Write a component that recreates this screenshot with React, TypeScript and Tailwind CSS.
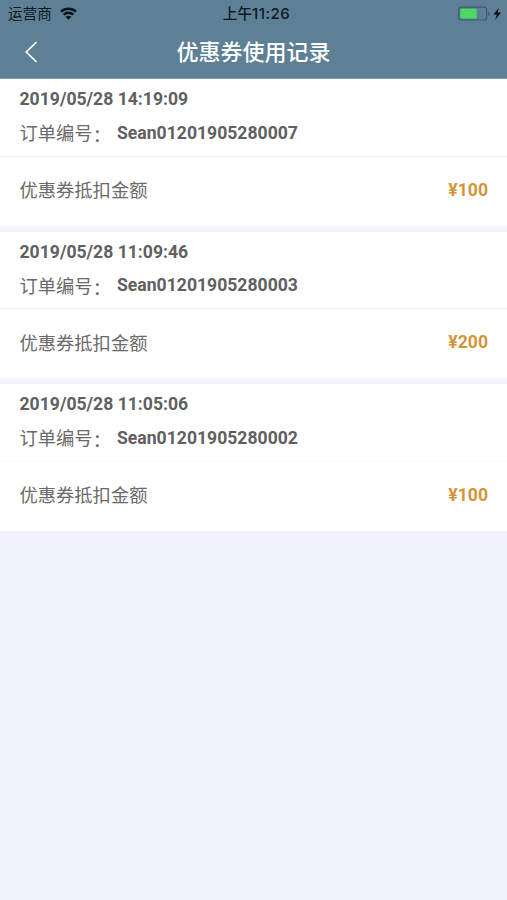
import React from 'react';

const records = [
  { time: '2019/05/28 14:19:09', orderNo: 'Sean01201905280007', amount: '¥100', divider: 'border-[#f2f2f4]' },
  { time: '2019/05/28 11:09:46', orderNo: 'Sean01201905280003', amount: '¥200', divider: 'border-[#f2f2f4]' },
  { time: '2019/05/28 11:05:06', orderNo: 'Sean01201905280002', amount: '¥100', divider: 'border-[#fbfbfc]' },
];

const WifiIcon = () => (
  <svg width="17" height="13" viewBox="0 0 17 13" fill="none" stroke="#0c1216" strokeWidth="2.5">
    <path d="M1 4.6C5.2 0.7 11.8 0.7 16 4.6" />
    <path d="M3.7 7.7C6.4 5.1 10.6 5.1 13.3 7.7" />
    <path d="M8.5 12.7L5.6 9.8C7.3 8.4 9.7 8.4 11.4 9.8Z" fill="#0c1216" stroke="none" />
  </svg>
);

const BatteryIcon = () => (
  <svg width="45" height="16" viewBox="0 0 45 16" fill="none">
    <rect x="0.7" y="1.2" width="28" height="12.8" rx="2.8" stroke="#3f596c" strokeWidth="1.2" />
    <rect x="2.3" y="2.8" width="16.4" height="9.6" rx="1" fill="#4cdb60" />
    <path d="M30.2 5.4V9.8C32 9.2 32 6 30.2 5.4Z" fill="#3f596c" />
    <path d="M40.8 1.8L35.4 8.4H38.8L37.2 14L43 6.6H39.7Z" fill="#0c1216" />
  </svg>
);

const StatusBar = () => (
  <div className="grid h-[27px] grid-cols-3 items-center pl-2 pr-1 text-[14.6px] leading-none text-[#10191f]">
    <div className="flex items-center gap-2">
      <span>运营商</span>
      <WifiIcon />
    </div>
    <span className="pl-0.5 text-center font-medium whitespace-nowrap">
      上午<span className="font-['Inter'] text-[15px] tracking-[0.5px]">11:26</span>
    </span>
    <div className="flex justify-end">
      <BatteryIcon />
    </div>
  </div>
);

const Header = () => (
  <header className="h-[79px] border-b border-[#7f9bac] bg-[#5d8096]">
    <StatusBar />
    <div className="grid h-[50px] grid-cols-[60px_1fr_60px] items-center">
      <button type="button" className="pl-6">
        <svg width="14" height="22" viewBox="0 0 14 22" fill="none" stroke="#fff" strokeWidth="1.7">
          <path d="M12.5 1.2L2.2 11L12.5 20.8" />
        </svg>
      </button>
      <h1 className="pb-[5px] text-center text-[22px] leading-none font-medium text-white">优惠券使用记录</h1>
    </div>
  </header>
);

const RecordCard = ({ time, orderNo, amount, divider }: (typeof records)[number]) => (
  <section className="h-[146.7px] bg-white text-[18.3px] leading-none text-[#6a6a6a]">
    <div className={`h-[77.5px] border-b pt-[11px] pl-[19.5px] ${divider}`}>
      <p className="h-[18px] font-['Roboto'] text-[17.6px] leading-[18px] font-bold text-[#606060]">{time}</p>
      <div className="mt-[13px] flex h-6 items-center">
        <span className="w-[97.5px] pb-0.5 whitespace-nowrap">
          订单编号<span className="inline-block translate-y-0.5">：</span>
        </span>
        <span className="pt-px font-['Roboto'] text-[17.6px] font-bold text-[#606060]">{orderNo}</span>
      </div>
    </div>
    <div className="flex h-[67px] items-center justify-between pr-[19px] pl-[19.5px]">
      <span className="pb-0.5">优惠券抵扣金额</span>
      <span className="pt-px font-['Roboto'] text-[17.6px] font-bold text-[#d2953a]">{amount}</span>
    </div>
  </section>
);

export default function App() {
  return (
    <div className="min-h-screen bg-[#f2f3fe] font-['Noto_Sans_CJK_SC',sans-serif]">
      <Header />
      <main className="flex flex-col gap-1.5">
        {records.map((record) => (
          <RecordCard key={record.orderNo} {...record} />
        ))}
      </main>
    </div>
  );
}
